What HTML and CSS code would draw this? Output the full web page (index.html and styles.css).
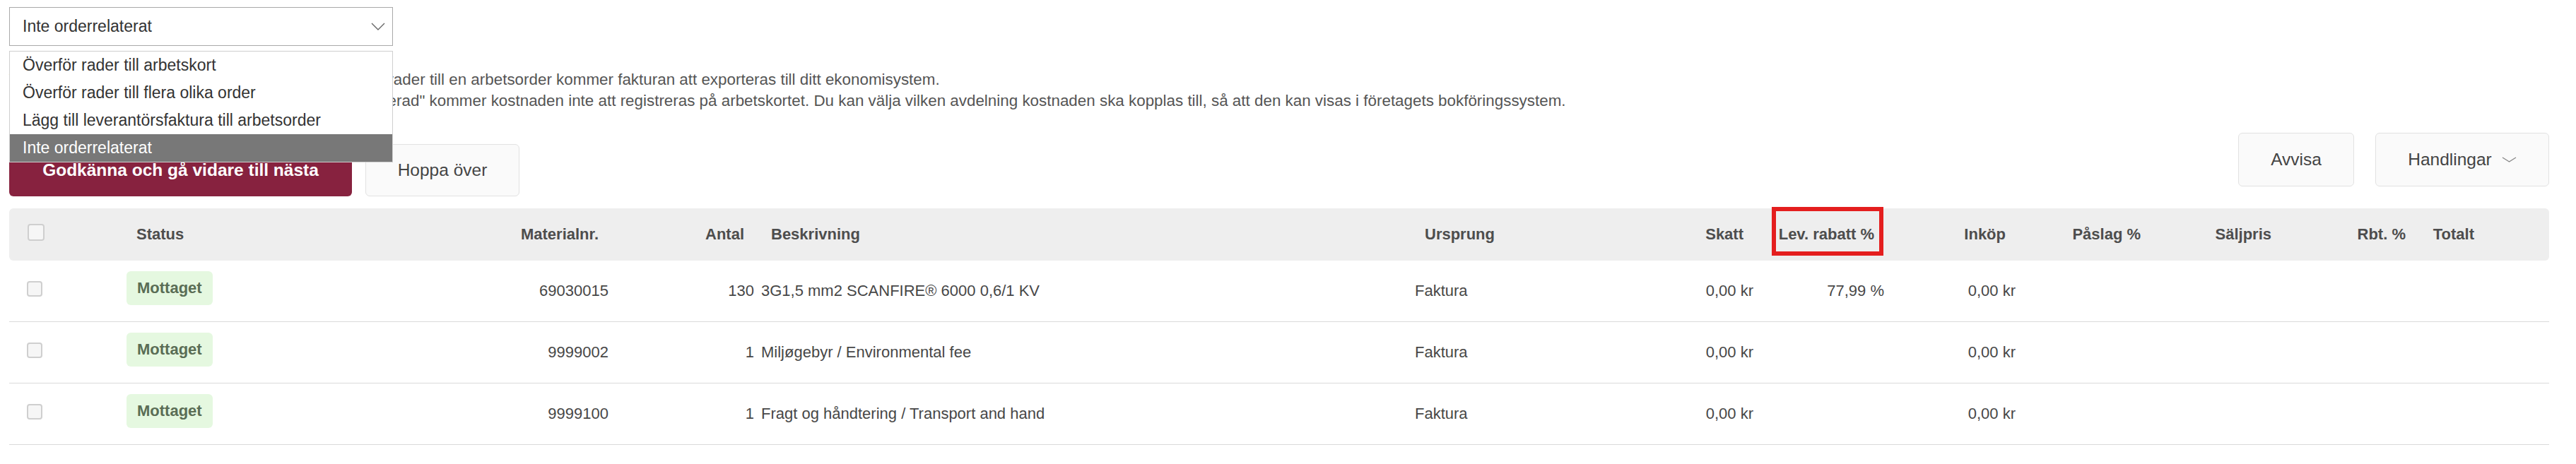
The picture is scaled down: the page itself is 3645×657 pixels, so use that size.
FILE: index.html
```html
<!DOCTYPE html>
<html lang="sv">
<head>
    <meta charset="UTF-8">
    <meta name="viewport" content="width=device-width, initial-scale=1.0">
    <link rel="stylesheet" href="styles.css">
    <title>Leverantörsfaktura - Granska</title>
</head>
<body>
    <div class="page">
        <div class="picker">
            <div class="select">
                <span>Inte orderrelaterat</span>
                <svg class="chevron" width="20" height="11" viewBox="0 0 20 11"><polyline points="1,1 10,10 19,1" fill="none" stroke="#666" stroke-width="1.4"/></svg>
            </div>
            <ul class="select-menu">
                <li>Överför rader till arbetskort</li>
                <li>Överför rader till flera olika order</li>
                <li>Lägg till leverantörsfaktura till arbetsorder</li>
                <li class="active">Inte orderrelaterat</li>
            </ul>
        </div>

        <div class="info">
            <p>Välj ett alternativ i listan ovan. När du valt att överföra rader till en arbetsorder kommer fakturan att exporteras till ditt ekonomisystem.</p>
            <p>Om du väljer att markera fakturan som "Inte orderrelaterad" kommer kostnaden inte att registreras på arbetskortet. Du kan välja vilken avdelning kostnaden ska kopplas till, så att den kan visas i företagets bokföringssystem.</p>
        </div>

        <div class="toolbar">
            <div class="toolbar-left">
                <button class="btn btn-primary">Godkänna och gå vidare till nästa</button>
                <button class="btn btn-skip">Hoppa över</button>
            </div>
            <div class="toolbar-right">
                <button class="btn btn-reject">Avvisa</button>
                <button class="btn btn-actions">Handlingar
                    <svg width="21" height="8" viewBox="0 0 21 8"><polyline points="1,1 10.5,7 20,1" fill="none" stroke="#888" stroke-width="1.4"/></svg>
                </button>
            </div>
        </div>

        <div class="invoice-table">
            <div class="row head">
                <div class="cell check-cell"><input type="checkbox" class="check"></div>
                <div class="cell">Status</div>
                <div class="cell num">Materialnr.</div>
                <div class="cell num">Antal</div>
                <div class="cell">Beskrivning</div>
                <div class="cell">Ursprung</div>
                <div class="cell num">Skatt</div>
                <div class="cell num marked">Lev. rabatt %<span class="highlight"></span></div>
                <div class="cell num">Inköp</div>
                <div class="cell num">Påslag %</div>
                <div class="cell num">Säljpris</div>
                <div class="cell num">Rbt. %</div>
                <div class="cell num">Totalt</div>
                <div class="cell"></div>
            </div>
            <div id="rows"></div>
        </div>
    </div>

    <script>
        const lines = [
            { nr: '69030015', qty: 130, text: '3G1,5 mm2 SCANFIRE® 6000 0,6/1 KV', origin: 'Faktura', tax: '0,00 kr', discount: '77,99 %', cost: '0,00 kr' },
            { nr: '9999002', qty: 1, text: 'Miljøgebyr / Environmental fee', origin: 'Faktura', tax: '0,00 kr', discount: '', cost: '0,00 kr' },
            { nr: '9999100', qty: 1, text: 'Fragt og håndtering / Transport and hand', origin: 'Faktura', tax: '0,00 kr', discount: '', cost: '0,00 kr' }
        ];

        function renderRows() {
            const rows = document.getElementById('rows');
            lines.forEach(line => {
                const row = document.createElement('div');
                row.className = 'row';
                row.innerHTML = `
                    <div class="cell check-cell"><input type="checkbox" class="check small"></div>
                    <div class="cell"><span class="badge">Mottaget</span></div>
                    <div class="cell num">${line.nr}</div>
                    <div class="cell num">${line.qty}</div>
                    <div class="cell">${line.text}</div>
                    <div class="cell">${line.origin}</div>
                    <div class="cell num">${line.tax}</div>
                    <div class="cell num">${line.discount}</div>
                    <div class="cell num">${line.cost}</div>
                    <div class="cell num"></div>
                    <div class="cell num"></div>
                    <div class="cell num"></div>
                    <div class="cell num"></div>
                    <div class="cell"></div>
                `;
                rows.appendChild(row);
            });
        }

        renderRows();
    </script>
</body>
</html>
```

FILE: styles.css
```css
body {
    font-family: "Liberation Sans", Arial, sans-serif;
    margin: 0;
    padding: 0;
    background: #fff;
    color: #444;
}
.page {
    padding: 10px 38px 0 13px;
}

/* order type picker */
.picker {
    position: relative;
    width: 543px;
}
.select {
    height: 55px;
    box-sizing: border-box;
    border: 1px solid #a9a9a9;
    display: flex;
    align-items: center;
    justify-content: space-between;
    padding: 0 10px 0 18px;
    font-size: 23px;
    color: #333;
    background: #fff;
}
.select-menu {
    position: absolute;
    top: 62px;
    left: 0;
    width: 543px;
    box-sizing: border-box;
    margin: 0;
    padding: 0;
    list-style: none;
    background: #fff;
    border: 1px solid #cfcfcf;
    z-index: 10;
}
.select-menu li {
    height: 39px;
    line-height: 39px;
    padding-left: 18px;
    font-size: 23px;
    color: #333;
}
.select-menu li.active {
    background-color: #787878;
    color: #fff;
}

/* help text */
.info {
    margin-top: 33px;
    font-size: 22.4px;
    line-height: 30px;
    color: #555;
}
.info p {
    margin: 0;
    white-space: nowrap;
}

/* buttons */
.toolbar {
    margin-top: 30px;
    height: 90px;
    display: flex;
    justify-content: space-between;
}
.toolbar-left {
    align-self: flex-end;
    display: flex;
    gap: 19px;
}
.toolbar-right {
    align-self: flex-start;
    display: flex;
    gap: 30px;
}
.btn {
    font-family: inherit;
    font-size: 24.5px;
    border-radius: 6px;
    cursor: pointer;
    box-sizing: border-box;
    display: flex;
    align-items: center;
    justify-content: center;
}
.btn-primary {
    width: 485px;
    height: 74px;
    background-color: #87223f;
    color: #fff;
    font-weight: bold;
    border: none;
}
.btn-skip,
.btn-reject,
.btn-actions {
    background-color: #fafafa;
    border: 1px solid #e2e2e2;
    color: #444;
}
.btn-skip {
    width: 218px;
    height: 74px;
}
.btn-reject {
    width: 164px;
    height: 76px;
}
.btn-actions {
    width: 246px;
    height: 76px;
    gap: 14px;
}

/* table */
.invoice-table {
    margin-top: 17px;
}
.row {
    display: grid;
    grid-template-columns: 161px 326px 366px 206px 925px 303px 186px 185px 186px 191px 185px 190px 97px 87px;
    height: 87px;
    box-sizing: border-box;
    border-bottom: 1px solid #dadada;
    font-size: 22px;
    color: #474747;
}
.row.head {
    height: 74px;
    background-color: #eeeeee;
    border-bottom: none;
    border-radius: 6px;
    font-weight: bold;
    color: #4d4d4d;
}
.cell {
    display: flex;
    align-items: center;
    padding: 0 5px;
    white-space: nowrap;
}
.head .cell {
    padding: 0 19px;
}
.cell.num {
    justify-content: flex-end;
}
.head .check-cell,
.check-cell {
    padding-left: 25px;
}
.head .check-cell {
    padding-left: 26px;
}
.check {
    appearance: none;
    margin: 0 0 6px 0;
    width: 24px;
    height: 24px;
    border: 2px solid #cfcfcf;
    border-radius: 4px;
    background: #f6f6f6;
}
.check.small {
    width: 22px;
    height: 22px;
    margin-bottom: 6px;
}
.badge {
    display: inline-flex;
    align-items: center;
    height: 48px;
    padding: 0 15px;
    margin-bottom: 8px;
    background-color: #e5f8e0;
    color: #5a6d55;
    font-weight: bold;
    border-radius: 6px;
}
.marked {
    position: relative;
}
.highlight {
    position: absolute;
    left: 21px;
    top: -2px;
    width: 158px;
    height: 69px;
    box-sizing: border-box;
    border: 6px solid #e41e1e;
}
```
